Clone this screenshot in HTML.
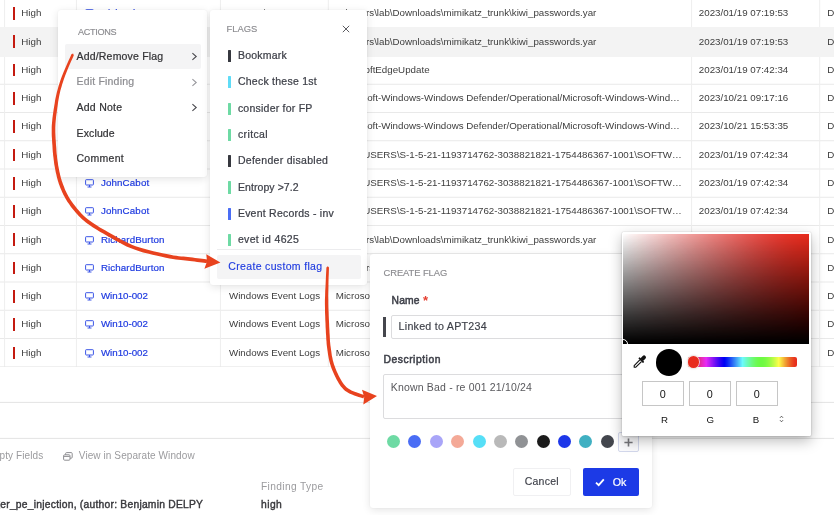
<!DOCTYPE html><html><head><meta charset="utf-8"><title>Create custom flag</title><style>
*{box-sizing:border-box;margin:0;padding:0}
html,body{width:834px;height:515px;overflow:hidden;background:#fff}
body{position:relative;font-family:"Liberation Sans",sans-serif;color:#333;font-size:9.75px}
#root{position:absolute;left:0;top:0;width:834px;height:515px;overflow:hidden;will-change:transform}
.abs{position:absolute}
.t{position:absolute;white-space:nowrap;line-height:1}
.cell{position:absolute;white-space:nowrap;line-height:1;font-size:9.75px;color:#3d3d3d}
.link{color:#1f3be0;-webkit-text-stroke:.2px #1f3be0}
.bar{position:absolute;width:2.4px;height:12.8px;background:#c41a10;left:12.9px}
.pop{position:absolute;background:#fff;border-radius:3px;box-shadow:0 2px 9px rgba(0,0,0,.11),0 0 2px rgba(0,0,0,.07)}
.fbar{position:absolute;left:227.8px;width:3.2px;height:12.4px;border-radius:.5px}
.dot{position:absolute;width:13px;height:13px;border-radius:50%}
.inp{position:absolute;border:1px solid #dcdcde;border-radius:2px;background:#fff}
</style></head><body><div id="root">
<svg class="abs" style="left:0;top:0" width="834" height="515" stroke="#e9e9e9" stroke-width="1"><line x1="0" y1="84.25" x2="834" y2="84.25"/><line x1="0" y1="112.50" x2="834" y2="112.50"/><line x1="0" y1="140.75" x2="834" y2="140.75"/><line x1="0" y1="169.00" x2="834" y2="169.00"/><line x1="0" y1="197.25" x2="834" y2="197.25"/><line x1="0" y1="225.50" x2="834" y2="225.50"/><line x1="0" y1="253.75" x2="834" y2="253.75"/><line x1="0" y1="282.00" x2="834" y2="282.00"/><line x1="0" y1="310.25" x2="834" y2="310.25"/><line x1="0" y1="338.50" x2="834" y2="338.50"/><line x1="4.6" y1="0" x2="4.6" y2="366.75" stroke="#eeeeee"/><line x1="76.4" y1="0" x2="76.4" y2="366.75" stroke="#eeeeee"/><line x1="220.4" y1="0" x2="220.4" y2="366.75" stroke="#eeeeee"/><line x1="328.3" y1="0" x2="328.3" y2="366.75" stroke="#eeeeee"/><line x1="691.6" y1="0" x2="691.6" y2="366.75" stroke="#eeeeee"/><line x1="819.7" y1="0" x2="819.7" y2="366.75" stroke="#eeeeee"/><line x1="0" y1="367.4" x2="834" y2="367.4" stroke="#e2e2e2" stroke-width="1.6"/><line x1="0" y1="402.4" x2="834" y2="402.4" stroke="#e4e4e4"/><line x1="0" y1="438.4" x2="834" y2="438.4" stroke="#e4e4e4"/></svg>
<div class="abs" style="left:0;top:27.25px;width:834px;height:29.25px;background:#f3f3f3"></div>
<div class="bar" style="top:7.00px"></div>
<div class="cell" style="left:21.3px;top:8.00px">High</div>
<svg class="abs" style="left:85.3px;top:9.1px" width="9" height="9" viewBox="0 0 9 9" fill="none" stroke="#3b55e6" stroke-width="1"><rect x=".6" y=".7" width="7.8" height="5.300" rx=".6"/><path d="M2.500 8h4M4.500 6v2"/></svg>
<div class="cell link" style="left:100.9px;top:8.00px;letter-spacing:0.106px">RichardBurton</div>
<div class="cell" style="left:229px;top:8.00px">YARA Signature</div>
<div class="cell" style="right:237.7px;top:8.00px">C:\Users\lab\Downloads\mimikatz_trunk\kiwi_passwords.yar</div>
<div class="cell" style="left:698.8px;top:8.00px">2023/01/19 07:19:53</div>
<div class="cell" style="left:827.2px;top:8.00px">Detected</div>
<div class="bar" style="top:35.30px"></div>
<div class="cell" style="left:21.3px;top:37.00px">High</div>
<svg class="abs" style="left:85.3px;top:37.4px" width="9" height="9" viewBox="0 0 9 9" fill="none" stroke="#3b55e6" stroke-width="1"><rect x=".6" y=".7" width="7.8" height="5.300" rx=".6"/><path d="M2.500 8h4M4.500 6v2"/></svg>
<div class="cell link" style="left:100.9px;top:37.00px;letter-spacing:0.106px">RichardBurton</div>
<div class="cell" style="left:229px;top:37.00px">YARA Signature</div>
<div class="cell" style="right:237.7px;top:37.00px">C:\Users\lab\Downloads\mimikatz_trunk\kiwi_passwords.yar</div>
<div class="cell" style="left:698.8px;top:37.00px">2023/01/19 07:19:53</div>
<div class="cell" style="left:827.2px;top:37.00px">Detected</div>
<div class="bar" style="top:63.60px"></div>
<div class="cell" style="left:21.3px;top:65.00px">High</div>
<svg class="abs" style="left:85.3px;top:65.7px" width="9" height="9" viewBox="0 0 9 9" fill="none" stroke="#3b55e6" stroke-width="1"><rect x=".6" y=".7" width="7.8" height="5.300" rx=".6"/><path d="M2.500 8h4M4.500 6v2"/></svg>
<div class="cell link" style="left:100.9px;top:65.00px;letter-spacing:0.106px">RichardBurton</div>
<div class="cell" style="left:229px;top:65.00px">Registry</div>
<div class="cell" style="left:335.8px;top:65.00px">MicrosoftEdgeUpdate</div>
<div class="cell" style="left:698.8px;top:65.00px">2023/01/19 07:42:34</div>
<div class="cell" style="left:827.2px;top:65.00px">Detected</div>
<div class="bar" style="top:91.90px"></div>
<div class="cell" style="left:21.3px;top:93.00px">High</div>
<svg class="abs" style="left:85.3px;top:94.0px" width="9" height="9" viewBox="0 0 9 9" fill="none" stroke="#3b55e6" stroke-width="1"><rect x=".6" y=".7" width="7.8" height="5.300" rx=".6"/><path d="M2.500 8h4M4.500 6v2"/></svg>
<div class="cell link" style="left:100.9px;top:93.00px;letter-spacing:0.106px">RichardBurton</div>
<div class="cell" style="left:229px;top:93.00px">Windows Event Logs</div>
<div class="cell" style="right:154.2px;top:93.00px">Microsoft-Windows-Windows Defender/Operational/Microsoft-Windows-Wind…</div>
<div class="cell" style="left:698.8px;top:93.00px">2023/10/21 09:17:16</div>
<div class="cell" style="left:827.2px;top:93.00px">Detected</div>
<div class="bar" style="top:120.20px"></div>
<div class="cell" style="left:21.3px;top:121.00px">High</div>
<svg class="abs" style="left:85.3px;top:122.3px" width="9" height="9" viewBox="0 0 9 9" fill="none" stroke="#3b55e6" stroke-width="1"><rect x=".6" y=".7" width="7.8" height="5.300" rx=".6"/><path d="M2.500 8h4M4.500 6v2"/></svg>
<div class="cell link" style="left:100.9px;top:121.00px;letter-spacing:0.106px">RichardBurton</div>
<div class="cell" style="left:229px;top:121.00px">Windows Event Logs</div>
<div class="cell" style="right:154.2px;top:121.00px">Microsoft-Windows-Windows Defender/Operational/Microsoft-Windows-Wind…</div>
<div class="cell" style="left:698.8px;top:121.00px">2023/10/21 15:53:35</div>
<div class="cell" style="left:827.2px;top:121.00px">Detected</div>
<div class="bar" style="top:148.50px"></div>
<div class="cell" style="left:21.3px;top:150.00px">High</div>
<svg class="abs" style="left:85.3px;top:150.6px" width="9" height="9" viewBox="0 0 9 9" fill="none" stroke="#3b55e6" stroke-width="1"><rect x=".6" y=".7" width="7.8" height="5.300" rx=".6"/><path d="M2.500 8h4M4.500 6v2"/></svg>
<div class="cell link" style="left:100.9px;top:150.00px;letter-spacing:0.138px">JohnCabot</div>
<div class="cell" style="left:229px;top:150.00px">Registry</div>
<div class="cell" style="right:152.2px;top:150.00px">HKEY_USERS\S-1-5-21-1193714762-3038821821-1754486367-1001\SOFTW…</div>
<div class="cell" style="left:698.8px;top:150.00px">2023/01/19 07:42:34</div>
<div class="cell" style="left:827.2px;top:150.00px">Detected</div>
<div class="bar" style="top:176.80px"></div>
<div class="cell" style="left:21.3px;top:178.00px">High</div>
<svg class="abs" style="left:85.3px;top:178.9px" width="9" height="9" viewBox="0 0 9 9" fill="none" stroke="#3b55e6" stroke-width="1"><rect x=".6" y=".7" width="7.8" height="5.300" rx=".6"/><path d="M2.500 8h4M4.500 6v2"/></svg>
<div class="cell link" style="left:100.9px;top:178.00px;letter-spacing:0.138px">JohnCabot</div>
<div class="cell" style="left:229px;top:178.00px">Registry</div>
<div class="cell" style="right:152.2px;top:178.00px">HKEY_USERS\S-1-5-21-1193714762-3038821821-1754486367-1001\SOFTW…</div>
<div class="cell" style="left:698.8px;top:178.00px">2023/01/19 07:42:34</div>
<div class="cell" style="left:827.2px;top:178.00px">Detected</div>
<div class="bar" style="top:205.10px"></div>
<div class="cell" style="left:21.3px;top:206.00px">High</div>
<svg class="abs" style="left:85.3px;top:207.2px" width="9" height="9" viewBox="0 0 9 9" fill="none" stroke="#3b55e6" stroke-width="1"><rect x=".6" y=".7" width="7.8" height="5.300" rx=".6"/><path d="M2.500 8h4M4.500 6v2"/></svg>
<div class="cell link" style="left:100.9px;top:206.00px;letter-spacing:0.138px">JohnCabot</div>
<div class="cell" style="left:229px;top:206.00px">Registry</div>
<div class="cell" style="right:152.2px;top:206.00px">HKEY_USERS\S-1-5-21-1193714762-3038821821-1754486367-1001\SOFTW…</div>
<div class="cell" style="left:698.8px;top:206.00px">2023/01/19 07:42:34</div>
<div class="cell" style="left:827.2px;top:206.00px">Detected</div>
<div class="bar" style="top:233.40px"></div>
<div class="cell" style="left:21.3px;top:235.00px">High</div>
<svg class="abs" style="left:85.3px;top:235.5px" width="9" height="9" viewBox="0 0 9 9" fill="none" stroke="#3b55e6" stroke-width="1"><rect x=".6" y=".7" width="7.8" height="5.300" rx=".6"/><path d="M2.500 8h4M4.500 6v2"/></svg>
<div class="cell link" style="left:100.9px;top:235.00px;letter-spacing:0.106px">RichardBurton</div>
<div class="cell" style="left:229px;top:235.00px">YARA Signature</div>
<div class="cell" style="right:237.7px;top:235.00px">C:\Users\lab\Downloads\mimikatz_trunk\kiwi_passwords.yar</div>
<div class="cell" style="left:698.8px;top:235.00px">2023/01/19 07:19:53</div>
<div class="cell" style="left:827.2px;top:235.00px">Detected</div>
<div class="bar" style="top:261.70px"></div>
<div class="cell" style="left:21.3px;top:263.00px">High</div>
<svg class="abs" style="left:85.3px;top:263.8px" width="9" height="9" viewBox="0 0 9 9" fill="none" stroke="#3b55e6" stroke-width="1"><rect x=".6" y=".7" width="7.8" height="5.300" rx=".6"/><path d="M2.500 8h4M4.500 6v2"/></svg>
<div class="cell link" style="left:100.9px;top:263.00px;letter-spacing:0.106px">RichardBurton</div>
<div class="cell" style="left:229px;top:263.00px">YARA Signature</div>
<div class="cell" style="right:237.7px;top:263.00px">C:\Users\lab\Downloads\mimikatz_trunk\kiwi_passwords.yar</div>
<div class="cell" style="left:698.8px;top:263.00px">2023/01/19 07:19:53</div>
<div class="cell" style="left:827.2px;top:263.00px">Detected</div>
<div class="bar" style="top:290.00px"></div>
<div class="cell" style="left:21.3px;top:291.00px">High</div>
<svg class="abs" style="left:85.3px;top:292.1px" width="9" height="9" viewBox="0 0 9 9" fill="none" stroke="#3b55e6" stroke-width="1"><rect x=".6" y=".7" width="7.8" height="5.300" rx=".6"/><path d="M2.500 8h4M4.500 6v2"/></svg>
<div class="cell link" style="left:100.9px;top:291.00px;letter-spacing:-0.017px">Win10-002</div>
<div class="cell" style="left:229px;top:291.00px">Windows Event Logs</div>
<div class="cell" style="left:335.8px;top:291.00px">Microsoft-Windows-Security-Auditing</div>
<div class="cell" style="left:698.8px;top:291.00px">2023/10/21 09:17:16</div>
<div class="cell" style="left:827.2px;top:291.00px">Detected</div>
<div class="bar" style="top:318.30px"></div>
<div class="cell" style="left:21.3px;top:319.00px">High</div>
<svg class="abs" style="left:85.3px;top:320.4px" width="9" height="9" viewBox="0 0 9 9" fill="none" stroke="#3b55e6" stroke-width="1"><rect x=".6" y=".7" width="7.8" height="5.300" rx=".6"/><path d="M2.500 8h4M4.500 6v2"/></svg>
<div class="cell link" style="left:100.9px;top:319.00px;letter-spacing:-0.017px">Win10-002</div>
<div class="cell" style="left:229px;top:319.00px">Windows Event Logs</div>
<div class="cell" style="left:335.8px;top:319.00px">Microsoft-Windows-Security-Auditing</div>
<div class="cell" style="left:698.8px;top:319.00px">2023/10/21 09:17:16</div>
<div class="cell" style="left:827.2px;top:319.00px">Detected</div>
<div class="bar" style="top:346.60px"></div>
<div class="cell" style="left:21.3px;top:348.00px">High</div>
<svg class="abs" style="left:85.3px;top:348.7px" width="9" height="9" viewBox="0 0 9 9" fill="none" stroke="#3b55e6" stroke-width="1"><rect x=".6" y=".7" width="7.8" height="5.300" rx=".6"/><path d="M2.500 8h4M4.500 6v2"/></svg>
<div class="cell link" style="left:100.9px;top:348.00px;letter-spacing:-0.017px">Win10-002</div>
<div class="cell" style="left:229px;top:348.00px">Windows Event Logs</div>
<div class="cell" style="left:335.8px;top:348.00px">Microsoft-Windows-Security-Auditing</div>
<div class="cell" style="left:698.8px;top:348.00px">2023/10/21 09:17:16</div>
<div class="cell" style="left:827.2px;top:348.00px">Detected</div>
<div class="abs" style="left:0;top:367.25px;width:834px;height:34px;background:#fff"></div>
<div class="t" style="top:451.00px;font-size:10px;color:#9b9b9e;right:790.70px;letter-spacing:.1px;">Empty Fields</div>
<svg class="abs" style="left:62.6px;top:451.6px" width="10" height="9" viewBox="0 0 10 9" fill="none" stroke="#8e8e92" stroke-width="1"><rect x="2.6" y=".6" width="6.6" height="5.6" rx="1"/><rect x=".6" y="2.8" width="6.4" height="5.4" rx="1" fill="#fff"/><path d="M.8 4.4h6"/></svg>
<div class="t" style="top:451.00px;font-size:10px;color:#9b9b9e;left:78.80px;letter-spacing:0.093px;">View in Separate Window</div>
<div class="t" style="top:482.00px;font-size:10.2px;color:#9b9b9e;left:261.00px;letter-spacing:0.365px;">Finding Type</div>
<div class="t" style="top:500.00px;font-size:10.3px;color:#38383c;-webkit-text-stroke:0.4px #38383c;right:631.00px;letter-spacing:0.237px;margin-right:-0.237px;">kiwi_passwords_yar_mimikatz_memssp_injection_hacker_pe_injection, (author: Benjamin DELPY</div>
<div class="t" style="top:500.00px;font-size:10.3px;color:#38383c;-webkit-text-stroke:0.4px #38383c;left:261.00px;letter-spacing:0.432px;">high</div>
<div class="pop" style="left:58.2px;top:10.2px;width:148.6px;height:167.3px"></div>
<div class="t" style="top:28.00px;font-size:9.1px;color:#8c8c90;-webkit-text-stroke:0.15px #8c8c90;left:77.90px;letter-spacing:-0.278px;">ACTIONS</div>
<div class="abs" style="left:65.3px;top:44.2px;width:135.5px;height:24.5px;background:#f4f4f5;border-radius:2px"></div>
<div class="t" style="top:51.00px;font-size:10.5px;color:#333336;-webkit-text-stroke:0.22px #333336;left:76.50px;letter-spacing:0.184px;">Add/Remove Flag</div>
<svg class="abs" style="left:191px;top:51.80px" width="7" height="9" viewBox="0 0 7 9" fill="none" stroke="#47474c" stroke-width="1.100"><path d="M1.4 1.2L5.2 4.5L1.4 7.8"/></svg>
<div class="t" style="top:76.00px;font-size:10.5px;color:#8e8e92;-webkit-text-stroke:0.22px #8e8e92;left:76.50px;letter-spacing:0.188px;">Edit Finding</div>
<svg class="abs" style="left:191px;top:78.00px" width="7" height="9" viewBox="0 0 7 9" fill="none" stroke="#97979c" stroke-width="1.100"><path d="M1.4 1.2L5.2 4.5L1.4 7.8"/></svg>
<div class="t" style="top:102.00px;font-size:10.5px;color:#333336;-webkit-text-stroke:0.22px #333336;left:76.50px;letter-spacing:0.265px;">Add Note</div>
<svg class="abs" style="left:191px;top:102.80px" width="7" height="9" viewBox="0 0 7 9" fill="none" stroke="#47474c" stroke-width="1.100"><path d="M1.4 1.2L5.2 4.5L1.4 7.8"/></svg>
<div class="t" style="top:128.00px;font-size:10.5px;color:#333336;-webkit-text-stroke:0.22px #333336;left:76.50px;letter-spacing:0.135px;">Exclude</div>
<div class="t" style="top:153.00px;font-size:10.5px;color:#333336;-webkit-text-stroke:0.22px #333336;left:76.50px;letter-spacing:0.284px;">Comment</div>
<div class="pop" style="left:210.1px;top:9.8px;width:156.5px;height:275.2px"></div>
<div class="t" style="top:24.00px;font-size:9.4px;color:#8c8c90;-webkit-text-stroke:0.15px #8c8c90;left:226.50px;letter-spacing:-0.004px;">FLAGS</div>
<svg class="abs" style="left:342.4px;top:25.4px" width="8" height="8" viewBox="0 0 8 8" fill="none" stroke="#5c5c61" stroke-width="1"><path d="M.8.8L7.2 7.2M7.2.8L.8 7.2"/></svg>
<div class="fbar" style="top:49.50px;background:#36383f"></div>
<div class="t" style="top:50.00px;font-size:10.5px;color:#3e4049;-webkit-text-stroke:0.22px #3e4049;left:237.90px;letter-spacing:0.242px;">Bookmark</div>
<div class="fbar" style="top:76.00px;background:#5fdcf7"></div>
<div class="t" style="top:76.00px;font-size:10.5px;color:#3e4049;-webkit-text-stroke:0.22px #3e4049;left:237.90px;letter-spacing:0.247px;">Check these 1st</div>
<div class="fbar" style="top:102.50px;background:#6edaa4"></div>
<div class="t" style="top:103.00px;font-size:10.5px;color:#3e4049;-webkit-text-stroke:0.22px #3e4049;left:237.90px;letter-spacing:0.234px;">consider for FP</div>
<div class="fbar" style="top:128.60px;background:#6edaa4"></div>
<div class="t" style="top:129.00px;font-size:10.5px;color:#3e4049;-webkit-text-stroke:0.22px #3e4049;left:237.90px;letter-spacing:0.397px;">critcal</div>
<div class="fbar" style="top:154.60px;background:#36383f"></div>
<div class="t" style="top:155.00px;font-size:10.5px;color:#3e4049;-webkit-text-stroke:0.22px #3e4049;left:237.90px;letter-spacing:0.298px;">Defender disabled</div>
<div class="fbar" style="top:181.30px;background:#6edaa4"></div>
<div class="t" style="top:182.00px;font-size:10.5px;color:#3e4049;-webkit-text-stroke:0.22px #3e4049;left:237.90px;letter-spacing:0.081px;">Entropy &gt;7.2</div>
<div class="fbar" style="top:207.80px;background:#4a6df5"></div>
<div class="t" style="top:208.00px;font-size:10.5px;color:#3e4049;-webkit-text-stroke:0.22px #3e4049;left:237.90px;letter-spacing:0.236px;">Event Records - inv</div>
<div class="fbar" style="top:233.60px;background:#6edaa4"></div>
<div class="t" style="top:234.00px;font-size:10.5px;color:#3e4049;-webkit-text-stroke:0.22px #3e4049;left:237.90px;letter-spacing:0.341px;">evet id 4625</div>
<div class="abs" style="left:217.2px;top:249.3px;width:143.6px;height:1px;background:#ececee"></div>
<div class="abs" style="left:217.2px;top:254.5px;width:143.6px;height:24.7px;background:#f4f4f5;border-radius:2px"></div>
<div class="t" style="top:261.00px;font-size:10.5px;color:#1f3be0;-webkit-text-stroke:0.15px #1f3be0;left:228.30px;letter-spacing:0.332px;">Create custom flag</div>
<div class="pop" style="left:370.2px;top:253.9px;width:281.5px;height:254.2px"></div>
<div class="t" style="top:268.00px;font-size:9.4px;color:#8c8c90;-webkit-text-stroke:0.15px #8c8c90;left:383.50px;letter-spacing:-0.072px;">CREATE FLAG</div>
<div class="t" style="top:296.00px;font-size:10.3px;color:#3e4049;-webkit-text-stroke:0.5px #3e4049;left:391.50px;letter-spacing:0.206px;">Name</div>
<div class="t" style="top:294.00px;font-size:13px;color:#e53e30;font-weight:bold;left:423.00px;">*</div>
<div class="abs" style="left:383.2px;top:317.4px;width:2.9px;height:19.4px;background:#45464d"></div>
<div class="inp" style="left:391px;top:314.6px;width:250px;height:24px"></div>
<div class="t" style="top:321.00px;font-size:10.7px;color:#3e4049;-webkit-text-stroke:0.15px #3e4049;left:398.60px;letter-spacing:0.246px;">Linked to APT234</div>
<div class="t" style="top:355.00px;font-size:10.3px;color:#3e4049;-webkit-text-stroke:0.5px #3e4049;left:383.50px;letter-spacing:0.544px;">Description</div>
<div class="inp" style="left:383.2px;top:373.8px;width:257.5px;height:45px"></div>
<div class="t" style="top:382.00px;font-size:10.5px;color:#58585c;left:390.80px;letter-spacing:0.174px;">Known Bad - re 001 21/10/24</div>
<div class="dot" style="left:387.10px;top:435.30px;background:#6edaa4"></div>
<div class="dot" style="left:408.47px;top:435.30px;background:#4a6df5"></div>
<div class="dot" style="left:429.84px;top:435.30px;background:#a9a5f8"></div>
<div class="dot" style="left:451.21px;top:435.30px;background:#f4a997"></div>
<div class="dot" style="left:472.58px;top:435.30px;background:#56dff7"></div>
<div class="dot" style="left:493.95px;top:435.30px;background:#b9b9b9"></div>
<div class="dot" style="left:515.32px;top:435.30px;background:#909295"></div>
<div class="dot" style="left:536.69px;top:435.30px;background:#1b1b1b"></div>
<div class="dot" style="left:558.06px;top:435.30px;background:#1d37e9"></div>
<div class="dot" style="left:579.43px;top:435.30px;background:#40b0c2"></div>
<div class="dot" style="left:600.80px;top:435.30px;background:#43464d"></div>
<div class="abs" style="left:618.4px;top:431.6px;width:20.2px;height:20.2px;border:1px solid #d3d8ec;border-radius:2px;background:#fbfbfd"></div>
<svg class="abs" style="left:624.1px;top:437.6px" width="9" height="9" viewBox="0 0 9 9" stroke="#77777c" stroke-width="1.6"><path d="M4.5 .4v8.200M.4 4.500h8.200"/></svg>
<div class="abs" style="left:513.3px;top:468.3px;width:57.4px;height:27.4px;border:1px solid #f0f0f2;border-radius:2px;background:#fff"></div>
<div class="t" style="top:476.00px;font-size:10.5px;color:#3e4049;-webkit-text-stroke:0.15px #3e4049;left:524.70px;letter-spacing:0.236px;">Cancel</div>
<div class="abs" style="left:583px;top:468px;width:56px;height:28px;background:#1c3ae6;border-radius:2px"></div>
<svg class="abs" style="left:595.3px;top:478px" width="10" height="9" viewBox="0 0 10 9" fill="none" stroke="#fff" stroke-width="1.850"><path d="M1 4.6L3.7 7.2L8.8 1.4"/></svg>
<div class="t" style="top:477.00px;font-size:10.7px;color:#fff;-webkit-text-stroke:0.2px #fff;left:612.80px;letter-spacing:-0.136px;">Ok</div>
<div class="pop" style="left:621.6px;top:232.2px;width:189px;height:203.700px;border-radius:1px;box-shadow:0 5px 14px rgba(0,0,0,.27),0 1px 3px rgba(0,0,0,.12),0 0 1px rgba(0,0,0,.35)"></div>
<svg class="abs" style="left:0;top:0" width="0" height="0"><defs><filter id="p3" x="0" y="0" width="1" height="1"><feColorMatrix color-interpolation-filters="linearRGB" type="matrix" values="0.8225 0.1774 0 0 0  0.0332 0.9669 0 0 0  0.0171 0.0724 0.9108 0 0  0 0 0 1 0"/><feComponentTransfer color-interpolation-filters="sRGB"><feFuncR type="gamma" exponent="1.1"/><feFuncG type="gamma" exponent="1.1"/><feFuncB type="gamma" exponent="1.1"/></feComponentTransfer></filter></defs></svg>
<div class="abs" style="left:623px;top:234.1px;width:186.2px;height:109.5px;overflow:hidden"><div class="abs" style="left:0;top:0;width:100%;height:100%;background:linear-gradient(to top,#000,rgba(0,0,0,0)),linear-gradient(to right,#fff,#f00);filter:url(#p3)"></div><div class="abs" style="left:-5px;top:104.7px;width:10px;height:10px;border-radius:50%;border:1.2px solid #fff"></div></div>
<svg class="abs" style="left:630px;top:352px" width="20" height="20" viewBox="-10 -10 20 20"><g transform="translate(.8 -1.400) rotate(45)" fill="#111" stroke="none"><path d="M-1.900 -1.200V-4.600a1.900 1.900 0 0 1 3.800 0V-1.200z"/><rect x="-3.300" y="-1.600" width="6.600" height="1.800" rx=".5"/><path d="M-1.150 .2V8.200L0 9.300L1.150 8.200V.2" fill="none" stroke="#111" stroke-width="1.150" stroke-linejoin="round"/></g></svg>
<div class="abs" style="left:656px;top:349.4px;width:26.2px;height:26.2px;border-radius:50%;background:#000"></div>
<div class="abs" style="left:688px;top:357px;width:109px;height:10px;border-radius:2px;background:linear-gradient(to right,#f00 0%,#f0f 16.67%,#00f 33.33%,#0ff 50%,#0f0 66.67%,#ff0 83.33%,#f00 100%);filter:url(#p3)"></div>
<div class="abs" style="left:687.8px;top:356.2px;width:11.6px;height:11.6px;border-radius:50%;background:#e82b1d;box-shadow:0 0 0 .7px #f6e4e1,0 0 2.500px rgba(0,0,0,.3)"></div>
<div class="abs" style="left:642px;top:381.1px;width:41.7px;height:24.5px;border:1px solid #c6c6c6;background:#fff"></div>
<div class="t" style="top:389.00px;font-size:10.8px;color:#111;left:642.00px;width:41.7px;text-align:center;">0</div>
<div class="abs" style="left:689px;top:381.1px;width:41.7px;height:24.5px;border:1px solid #c6c6c6;background:#fff"></div>
<div class="t" style="top:389.00px;font-size:10.8px;color:#111;left:689.00px;width:41.7px;text-align:center;">0</div>
<div class="abs" style="left:736px;top:381.1px;width:41.7px;height:24.5px;border:1px solid #c6c6c6;background:#fff"></div>
<div class="t" style="top:389.00px;font-size:10.8px;color:#111;left:736.00px;width:41.7px;text-align:center;">0</div>
<div class="t" style="top:415.00px;font-size:9.7px;color:#111;left:654.40px;width:20px;text-align:center;">R</div>
<div class="t" style="top:415.00px;font-size:9.7px;color:#111;left:700.20px;width:20px;text-align:center;">G</div>
<div class="t" style="top:415.00px;font-size:9.7px;color:#111;left:746.10px;width:20px;text-align:center;">B</div>
<svg class="abs" style="left:778.9px;top:415.3px" width="5" height="8" viewBox="0 0 5 8" fill="none" stroke="#333" stroke-width=".8"><path d="M1 2.800L2.500 1.200L4 2.800M1 5.200L2.500 6.800L4 5.200"/></svg>
<svg class="abs" style="left:0;top:0" width="834" height="515" fill="#e8421e" stroke="none">
<path d="M73.1,53.6 L71.4,54.3 L70.7,55.9 L69.8,58.0 L68.6,60.5 L67.4,63.3 L66.1,66.2 L64.8,69.2 L63.6,72.0 L62.6,74.5 L61.7,76.8 L60.9,79.1 L60.1,81.3 L59.4,83.4 L58.7,85.6 L58.1,87.7 L57.5,89.9 L56.9,92.0 L56.4,94.3 L55.9,96.5 L55.4,98.7 L55.0,100.9 L54.7,103.2 L54.3,105.4 L54.0,107.6 L53.6,109.8 L53.3,112.0 L53.0,114.1 L52.7,116.3 L52.4,118.5 L52.2,120.7 L52.0,122.9 L51.8,125.1 L51.7,127.3 L51.7,129.6 L51.7,132.0 L51.7,134.3 L51.8,136.7 L52.0,139.0 L52.1,141.2 L52.2,143.3 L52.4,145.3 L52.5,147.2 L52.6,148.9 L52.7,150.5 L52.8,152.0 L53.0,153.5 L53.1,155.0 L53.3,156.6 L53.5,158.1 L53.7,159.7 L53.9,161.3 L54.1,162.9 L54.3,164.5 L54.6,166.1 L54.9,167.7 L55.2,169.3 L55.5,170.9 L55.8,172.5 L56.2,174.1 L56.6,175.7 L56.9,177.3 L57.4,178.9 L57.8,180.5 L58.3,182.1 L58.8,183.7 L59.4,185.3 L60.0,186.9 L60.6,188.5 L61.3,190.1 L62.0,191.7 L62.7,193.3 L63.5,195.0 L64.4,196.6 L65.3,198.2 L66.2,199.8 L67.2,201.4 L68.3,203.0 L69.4,204.6 L70.5,206.2 L71.8,207.9 L73.1,209.5 L74.4,211.1 L75.8,212.7 L77.2,214.3 L78.7,215.9 L80.3,217.6 L82.0,219.2 L83.9,220.8 L85.9,222.5 L88.0,224.1 L90.2,225.6 L92.6,227.2 L95.1,228.8 L97.6,230.3 L100.3,231.9 L103.2,233.6 L106.1,235.2 L109.2,237.0 L112.4,238.8 L115.7,240.7 L119.2,242.6 L122.8,244.5 L126.5,246.4 L130.4,248.1 L134.4,249.6 L138.6,251.1 L143.1,252.4 L147.8,253.6 L152.6,254.8 L157.3,255.8 L161.8,256.8 L165.9,257.7 L169.6,258.4 L172.9,259.0 L175.9,259.5 L178.5,259.8 L180.9,260.1 L183.2,260.3 L185.4,260.5 L187.6,260.7 L189.8,260.9 L192.1,261.2 L194.6,261.6 L197.1,261.9 L199.5,262.2 L201.8,262.5 L203.8,262.7 L205.5,263.0 L206.8,263.1 L207.2,259.5 L205.9,259.3 L204.3,259.1 L202.2,258.8 L200.0,258.5 L197.6,258.2 L195.1,257.9 L192.6,257.6 L190.2,257.3 L187.9,257.0 L185.7,256.8 L183.5,256.6 L181.3,256.4 L178.9,256.2 L176.4,255.8 L173.6,255.4 L170.4,254.8 L166.7,254.0 L162.5,253.2 L158.1,252.2 L153.4,251.2 L148.7,250.1 L144.1,248.8 L139.7,247.5 L135.6,246.2 L131.8,244.7 L128.1,243.0 L124.5,241.2 L120.9,239.4 L117.5,237.5 L114.2,235.6 L111.0,233.7 L107.9,232.0 L105.0,230.3 L102.2,228.7 L99.5,227.2 L97.0,225.6 L94.6,224.1 L92.3,222.6 L90.2,221.1 L88.1,219.5 L86.2,218.0 L84.5,216.5 L82.9,214.9 L81.4,213.4 L79.9,211.8 L78.6,210.3 L77.2,208.7 L75.9,207.1 L74.7,205.6 L73.5,204.0 L72.4,202.5 L71.3,201.0 L70.3,199.4 L69.4,197.9 L68.5,196.4 L67.6,194.8 L66.8,193.3 L66.1,191.8 L65.3,190.2 L64.7,188.7 L64.1,187.1 L63.5,185.6 L62.9,184.1 L62.4,182.5 L61.8,181.0 L61.4,179.4 L60.9,177.9 L60.5,176.3 L60.1,174.8 L59.8,173.2 L59.4,171.7 L59.1,170.1 L58.8,168.6 L58.5,167.0 L58.2,165.5 L58.0,163.9 L57.8,162.4 L57.5,160.8 L57.3,159.2 L57.1,157.7 L57.0,156.1 L56.8,154.7 L56.6,153.2 L56.5,151.7 L56.4,150.2 L56.3,148.6 L56.2,146.9 L56.0,145.1 L55.9,143.1 L55.8,141.0 L55.6,138.8 L55.5,136.5 L55.4,134.2 L55.3,131.9 L55.3,129.6 L55.3,127.5 L55.4,125.3 L55.5,123.2 L55.7,121.0 L55.9,118.9 L56.1,116.7 L56.4,114.6 L56.7,112.4 L57.0,110.2 L57.3,108.0 L57.6,105.9 L57.9,103.7 L58.2,101.5 L58.6,99.3 L59.0,97.1 L59.4,94.9 L59.9,92.8 L60.4,90.6 L61.0,88.5 L61.6,86.4 L62.2,84.3 L62.9,82.2 L63.6,80.0 L64.4,77.8 L65.2,75.5 L66.2,73.0 L67.3,70.2 L68.5,67.3 L69.8,64.3 L71.0,61.6 L72.2,59.0 L73.1,56.9 L73.8,55.3Z"/>
<path d="M327.8,266.2 L326.4,267.4 L326.3,270.0 L326.1,273.3 L325.9,277.4 L325.7,281.8 L325.5,286.5 L325.2,291.2 L325.1,295.8 L324.9,300.0 L324.9,304.0 L325.0,308.0 L325.0,312.0 L325.2,316.0 L325.3,319.9 L325.5,323.5 L325.6,327.0 L325.8,330.1 L325.9,332.9 L326.1,335.3 L326.2,337.6 L326.3,339.7 L326.5,341.6 L326.6,343.6 L326.8,345.6 L327.1,347.7 L327.4,349.9 L327.7,352.1 L328.0,354.3 L328.4,356.6 L328.8,358.8 L329.3,361.1 L329.9,363.3 L330.6,365.6 L331.4,367.9 L332.3,370.2 L333.3,372.6 L334.4,375.0 L335.5,377.3 L336.6,379.5 L337.8,381.5 L338.9,383.4 L339.9,384.9 L340.9,386.4 L341.9,387.6 L343.0,388.8 L344.1,389.9 L345.3,390.9 L346.6,391.8 L348.1,392.8 L349.9,393.7 L352.0,394.6 L354.2,395.5 L356.5,396.3 L358.6,397.0 L360.6,397.6 L362.2,398.1 L363.4,398.5 L364.6,395.1 L363.4,394.7 L361.7,394.2 L359.7,393.5 L357.6,392.8 L355.4,392.1 L353.3,391.3 L351.5,390.5 L349.9,389.6 L348.6,388.8 L347.5,388.0 L346.5,387.2 L345.6,386.3 L344.7,385.3 L343.8,384.2 L342.9,382.9 L341.9,381.4 L340.9,379.7 L339.8,377.8 L338.7,375.7 L337.7,373.5 L336.6,371.2 L335.7,368.9 L334.8,366.6 L334.0,364.4 L333.4,362.3 L332.8,360.2 L332.4,358.1 L331.9,355.9 L331.6,353.8 L331.3,351.6 L331.0,349.4 L330.7,347.3 L330.4,345.2 L330.2,343.2 L330.0,341.3 L329.9,339.4 L329.8,337.4 L329.7,335.2 L329.5,332.7 L329.4,329.9 L329.2,326.8 L329.1,323.4 L328.9,319.7 L328.7,315.9 L328.6,311.9 L328.4,307.9 L328.3,303.9 L328.3,300.0 L328.2,295.9 L328.3,291.3 L328.4,286.6 L328.5,281.9 L328.6,277.5 L328.8,273.5 L328.9,270.1 L329.0,267.6Z"/>
<path d="M220.4 262.400L206.300 254.200L207 261.400L204.400 268.800Z"/>
<path d="M377 396.100L362 389.700L364.200 397L363.300 404.400Z"/>
</svg>
</div></body></html>
